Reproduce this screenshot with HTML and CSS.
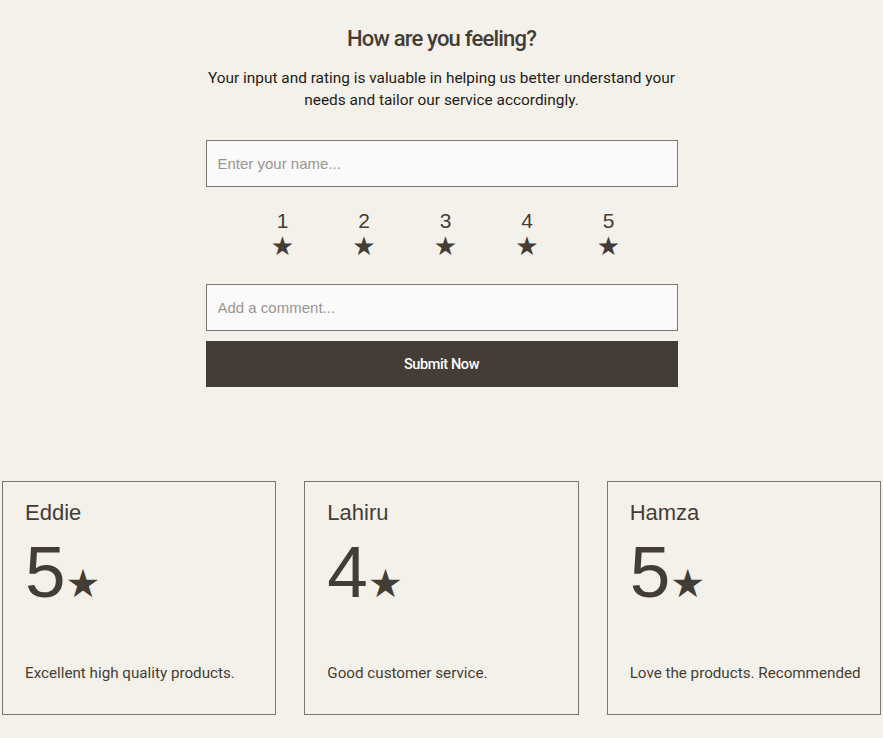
FILE: index.html
```html
<!DOCTYPE html>
<html>
<head>
<meta charset="utf-8">
<link rel="stylesheet" href="styles.css">
</head>
<body>
<main class="page">
  <section class="form">
    <h1 class="title">How are you feeling?</h1>
    <p class="lead">Your input and rating is valuable in helping us better understand your needs and tailor our service accordingly.</p>
    <input class="field" type="text" placeholder="Enter your name...">
    <div class="rating">
      <div class="rate"><span class="num">1</span><span class="star">★</span></div>
      <div class="rate"><span class="num">2</span><span class="star">★</span></div>
      <div class="rate"><span class="num">3</span><span class="star">★</span></div>
      <div class="rate"><span class="num">4</span><span class="star">★</span></div>
      <div class="rate"><span class="num">5</span><span class="star">★</span></div>
    </div>
    <input class="field" type="text" placeholder="Add a comment...">
    <button class="submit">Submit Now</button>
  </section>
  <section class="reviews">
    <article class="card">
      <div class="name">Eddie</div>
      <div class="score">5<span class="bigstar">★</span></div>
      <div class="comment">Excellent high quality products.</div>
    </article>
    <article class="card">
      <div class="name">Lahiru</div>
      <div class="score">4<span class="bigstar">★</span></div>
      <div class="comment">Good customer service.</div>
    </article>
    <article class="card">
      <div class="name">Hamza</div>
      <div class="score">5<span class="bigstar">★</span></div>
      <div class="comment">Love the products. Recommended</div>
    </article>
  </section>
</main>
</body>
</html>
```
FILE: styles.css
```css
html, body {
  margin: 0;
  padding: 0;
  background: #f4f1ea;
  color: #433d36;
  font-family: "Liberation Sans", Arial, sans-serif;
}
.page {
  display: flex;
  flex-direction: column;
  align-items: center;
}
.form {
  width: 472px;
  display: flex;
  flex-direction: column;
  align-items: stretch;
  padding-top: 25px;
}
.title {
  margin: 0;
  text-align: center;
  font-family: "Roboto", sans-serif;
  font-weight: 500;
  font-size: 22px;
  letter-spacing: -0.8px;
  line-height: 28px;
  color: #433d36;
}
.lead {
  margin: 14px -6px 0;
  text-align: center;
  font-family: "Roboto", sans-serif;
  font-size: 15.4px;
  line-height: 22px;
  color: #1f1b17;
}
.field {
  box-sizing: border-box;
  height: 47px;
  margin-top: 29px;
  border: 1px solid #7c766e;
  background: #fafafa;
  padding: 0 11px;
  font-family: "Liberation Sans", sans-serif;
  font-size: 15px;
  color: #433d36;
  outline: none;
}
.field::placeholder { color: #9a958e; }
.rating {
  display: flex;
  justify-content: center;
  margin-top: 22px;
  padding-left: 8px;
}
.rate {
  width: 81.5px;
  display: flex;
  flex-direction: column;
  align-items: center;
}
.num {
  font-size: 21px;
  line-height: 24px;
  color: #433d36;
}
.star {
  font-family: "DejaVu Sans", sans-serif;
  font-size: 26px;
  line-height: 26px;
  color: #433d36;
}
.rating + .field { margin-top: 25px; }
.submit {
  box-sizing: border-box;
  height: 46px;
  margin-top: 10px;
  border: 0;
  background: #433d36;
  color: #ffffff;
  font-family: "Roboto", sans-serif;
  font-weight: 500;
  font-size: 14.5px;
  letter-spacing: -0.4px;
}
.reviews {
  align-self: stretch;
  display: grid;
  grid-template-columns: repeat(3, minmax(0, 1fr));
  gap: 28px;
  padding: 0 2px;
  margin-top: 94px;
}
.card {
  box-sizing: border-box;
  height: 234px;
  border: 1px solid #7c766e;
  padding: 17px 22px 0;
  display: flex;
  flex-direction: column;
}
.name {
  font-size: 22px;
  line-height: 28px;
  color: #433d36;
}
.score {
  font-size: 73px;
  line-height: 70px;
  margin-top: 10px;
  color: #433d36;
}
.bigstar {
  font-family: "DejaVu Sans", sans-serif;
  font-size: 39px;
  line-height: 1;
}
.comment {
  margin-top: auto;
  margin-bottom: 31px;
  font-family: "Roboto", sans-serif;
  font-size: 15.2px;
  line-height: 20px;
  white-space: nowrap;
  color: #433d36;
}
```
